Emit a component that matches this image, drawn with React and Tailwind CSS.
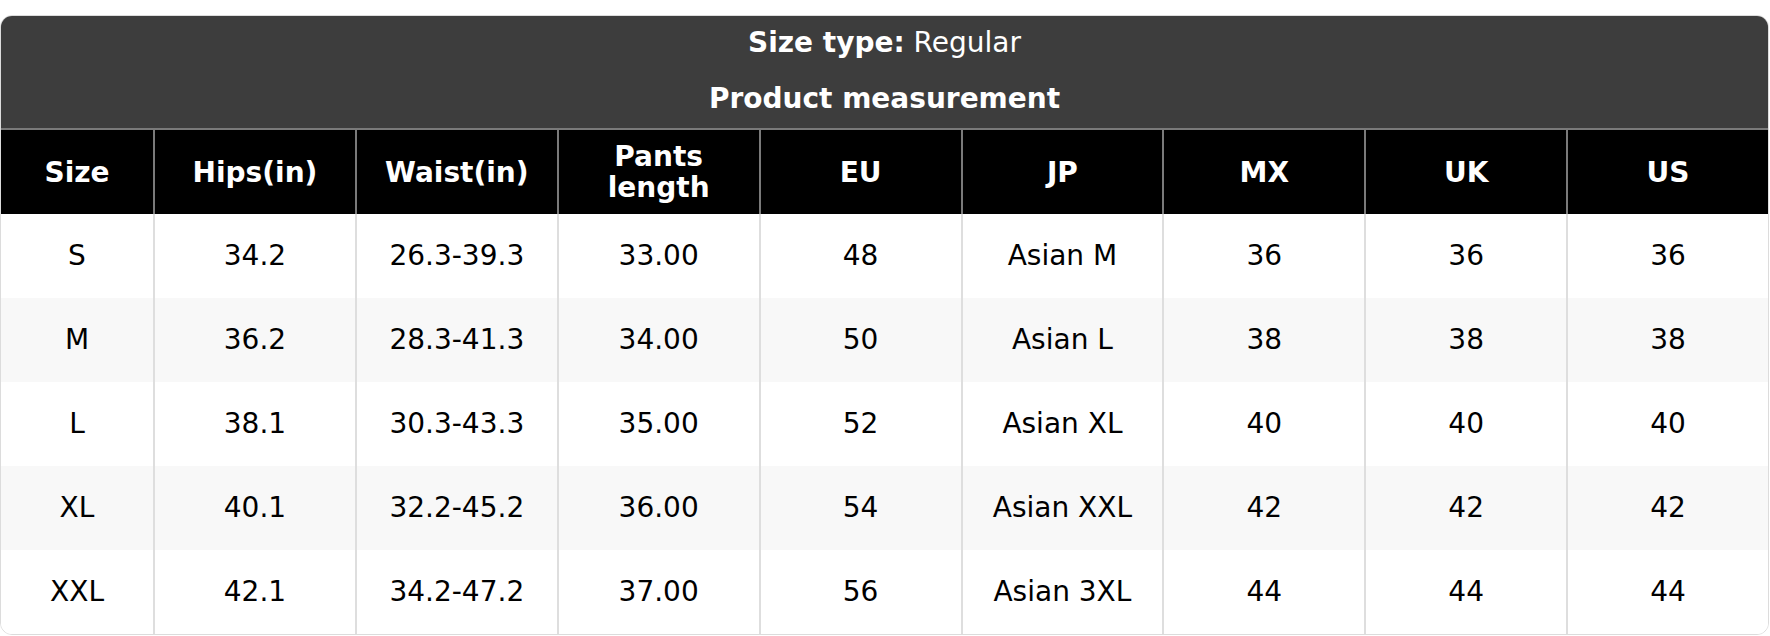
const headers = ['Size', 'Hips(in)', 'Waist(in)', 'Pants length', 'EU', 'JP', 'MX', 'UK', 'US'];

const rows = [
  ['S', '34.2', '26.3-39.3', '33.00', '48', 'Asian M', '36', '36', '36'],
  ['M', '36.2', '28.3-41.3', '34.00', '50', 'Asian L', '38', '38', '38'],
  ['L', '38.1', '30.3-43.3', '35.00', '52', 'Asian XL', '40', '40', '40'],
  ['XL', '40.1', '32.2-45.2', '36.00', '54', 'Asian XXL', '42', '42', '42'],
  ['XXL', '42.1', '34.2-47.2', '37.00', '56', 'Asian 3XL', '44', '44', '44'],
];

export default function App() {
  return (
    <div className="bg-white pt-[15px]" style={{ fontFamily: '"DejaVu Sans", sans-serif' }}>
      <div className="w-[1769px] rounded-[12px] border border-[#dcdcdc] overflow-hidden">
        {/* caption */}
        <div className="bg-[#3d3d3d] text-white text-[28px] text-center pt-[11px] pb-[13px]">
          <div className="h-[32px] leading-[32px]">
            <span className="font-bold">Size type:</span> Regular
          </div>
          <div className="h-[32px] leading-[32px] mt-[24px] font-bold">Product measurement</div>
        </div>

        {/* header row */}
        <div className="grid grid-cols-[152px_repeat(8,1fr)] bg-black text-white font-bold text-[28px] border-t-2 border-[#7a7a7a]">
          {headers.map((h, i) => (
            <div
              key={h}
              className={
                'h-[84px] flex items-center justify-center text-center leading-[31px] px-2 ' +
                (i > 0 ? 'border-l-2 border-[#7a7a7a]' : '')
              }
            >
              {h === 'Pants length' ? (
                <span>
                  Pants
                  <br />
                  length
                </span>
              ) : (
                h
              )}
            </div>
          ))}
        </div>

        {/* body */}
        {rows.map((r, ri) => (
          <div
            key={r[0]}
            className={
              'grid grid-cols-[152px_repeat(8,1fr)] text-[28px] text-black ' +
              (ri % 2 === 1 ? 'bg-[#f8f8f8]' : 'bg-white')
            }
          >
            {r.map((c, ci) => (
              <div
                key={ci}
                className={
                  'h-[84px] flex items-center justify-center ' +
                  (ci > 0 ? 'border-l-2 border-[#dedede]' : '')
                }
              >
                {c}
              </div>
            ))}
          </div>
        ))}
      </div>
    </div>
  );
}
